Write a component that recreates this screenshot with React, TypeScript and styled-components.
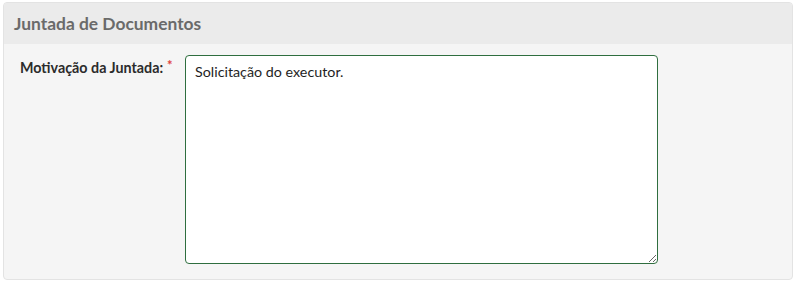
import React from "react";
import styled, { createGlobalStyle } from "styled-components";

const Global = createGlobalStyle`
  html, body { margin: 0; padding: 0; background: #ffffff; }
  body { font-family: Lato, "Open Sans", sans-serif; }
  * { box-sizing: border-box; }
`;

const Page = styled.div`
  padding: 2px 3px 0 3px;
  width: 796px;
`;

const Panel = styled.section`
  border: 1px solid #e3e3e3;
  border-radius: 4px;
  background: #f5f5f5;
  overflow: hidden;
  height: 278px;
  display: flex;
  flex-direction: column;
`;

const Header = styled.header`
  background: #ebebeb;
  height: 41px;
  padding: 0 10px;
  display: flex;
  align-items: center;
`;

const Title = styled.h2`
  margin: 0;
  font-family: Lato, sans-serif;
  font-size: 17.4px;
  font-weight: 700;
  color: #6a6a6a;
`;

const Body = styled.div`
  display: flex;
  padding: 11px 0 0 16px;
  gap: 10px;
`;

const Label = styled.label`
  font-family: Lato, sans-serif;
  font-weight: 700;
  font-size: 14.3px;
  color: #2b2b2b;
  padding-top: 4px;
  width: 155px;
  white-space: nowrap;
`;

const Required = styled.span`
  color: #e0403a;
  font-size: 13px;
  vertical-align: top;
  position: relative;
  top: -2px;
  margin-left: 4px;
`;

const Area = styled.textarea`
  width: 473px;
  height: 209px;
  border: 1px solid #2f6e3f;
  border-radius: 4px;
  background: #fff;
  font-family: Lato, sans-serif;
  font-size: 14.3px;
  color: #1e1e1e;
  padding: 7px 9px;
  resize: vertical;
  outline: none;
`;

export default function App() {
  return (
    <>
      <Global />
      <Page>
        <Panel>
          <Header>
            <Title>Juntada de Documentos</Title>
          </Header>
          <Body>
            <Label>
              Motivação da Juntada:<Required>*</Required>
            </Label>
            <Area defaultValue="Solicitação do executor." />
          </Body>
        </Panel>
      </Page>
    </>
  );
}
